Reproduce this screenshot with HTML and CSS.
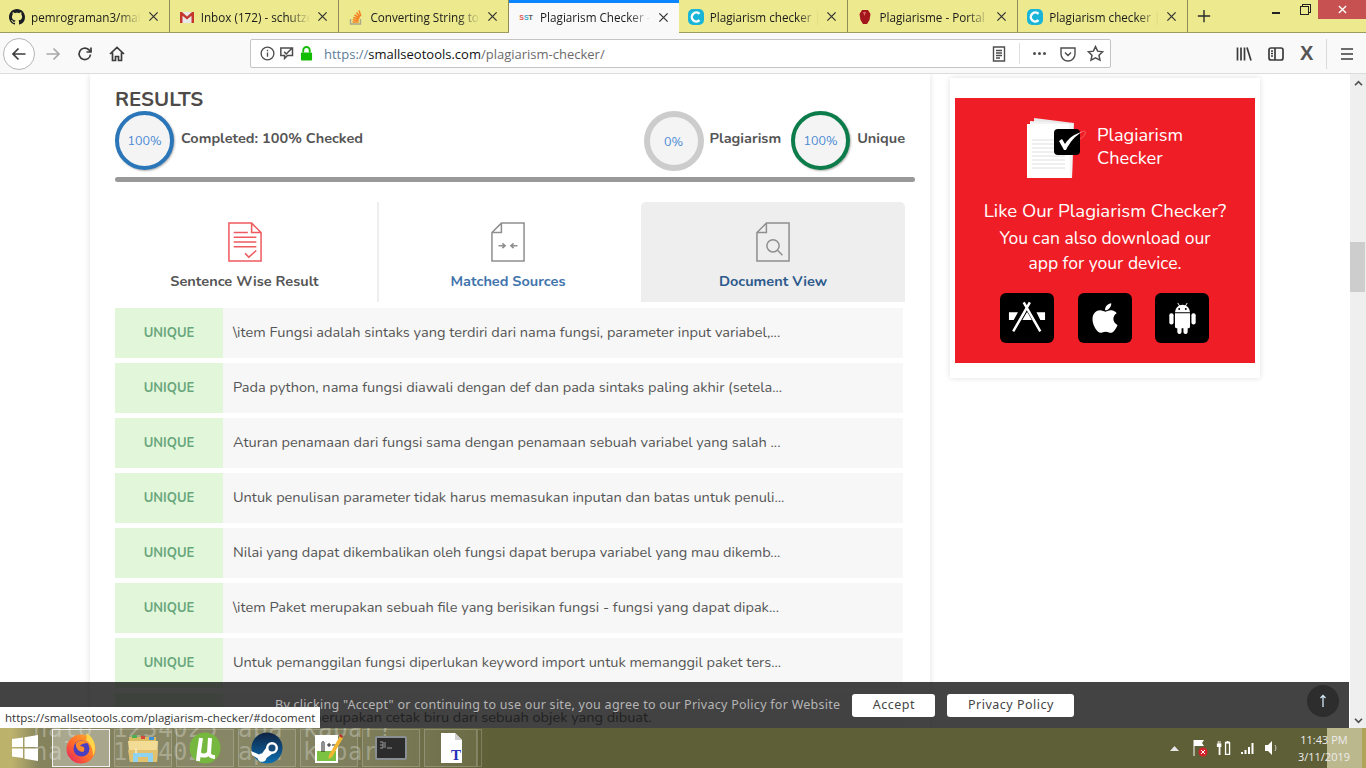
FILE: index.html
```html
<!DOCTYPE html>
<html>
<head>
  <meta charset="UTF-8">
  <title>Plagiarism Checker</title>
  <link rel="stylesheet" href="styles.css">
</head>
<body>
  <div id="browser">
    <!-- Tab strip -->
    <div class="tabbar">
      <div class="tab">
        <svg class="favicon" viewBox="0 0 16 16"><path fill="#1b1f23" d="M8 0C3.58 0 0 3.58 0 8c0 3.54 2.29 6.53 5.47 7.59.4.07.55-.17.55-.38 0-.19-.01-.82-.01-1.49-2.01.37-2.53-.49-2.69-.94-.09-.23-.48-.94-.82-1.13-.28-.15-.68-.52-.01-.53.63-.01 1.08.58 1.23.82.72 1.21 1.87.87 2.33.66.07-.52.28-.87.51-1.07-1.78-.2-3.64-.89-3.64-3.95 0-.87.31-1.59.82-2.15-.08-.2-.36-1.02.08-2.12 0 0 .67-.21 2.2.82.64-.18 1.32-.27 2-.27.68 0 1.36.09 2 .27 1.53-1.04 2.2-.82 2.2-.82.44 1.1.16 1.92.08 2.12.51.56.82 1.27.82 2.15 0 3.07-1.87 3.75-3.65 3.95.29.25.54.73.54 1.48 0 1.07-.01 1.93-.01 2.2 0 .21.15.46.55.38A8.013 8.013 0 0016 8c0-4.42-3.58-8-8-8z"/></svg>
        <span class="tab-title">pemrograman3/main.py</span>
        <svg class="tab-close" viewBox="0 0 12 12"><path d="M1.5 1.5l9 9M10.5 1.5l-9 9"/></svg>
      </div>
      <div class="tab">
        <svg class="favicon" viewBox="0 0 16 16"><path fill="#e8e8e8" d="M1 3h14v11H1z"/><path fill="#c5372c" d="M1 3h2l5 4.5L13 3h2v11h-2.5V6.8L8 10.5 3.5 6.8V14H1z"/></svg>
        <span class="tab-title">Inbox (172) - schutzen</span>
        <svg class="tab-close" viewBox="0 0 12 12"><path d="M1.5 1.5l9 9M10.5 1.5l-9 9"/></svg>
      </div>
      <div class="tab">
        <svg class="favicon" viewBox="0 0 16 16"><path fill="none" stroke="#a9a88a" stroke-width="1.4" d="M2.5 10v5h10v-5"/><path fill="none" stroke="#f48024" stroke-width="1.5" d="M4.5 13h6M4.7 10.8l5.9.6M5.2 8.5l5.7 1.5M6.5 6l5 3M8.5 3.5l3.5 4.5M11 1.5l1.8 5.500"/></svg>
        <span class="tab-title">Converting String to int</span>
        <svg class="tab-close" viewBox="0 0 12 12"><path d="M1.5 1.5l9 9M10.5 1.5l-9 9"/></svg>
      </div>
      <div class="tab tab-active">
        <span class="favicon sst-icon"><i>S</i><i>S</i><i>T</i></span>
        <span class="tab-title">Plagiarism Checker - 100%</span>
        <svg class="tab-close" viewBox="0 0 12 12"><path d="M1.5 1.5l9 9M10.5 1.5l-9 9"/></svg>
      </div>
      <div class="tab">
        <svg class="favicon" viewBox="0 0 16 16"><rect width="16" height="16" rx="5" fill="#19b5d8"/><path fill="none" stroke="#fff" stroke-width="2.4" d="M11.5 4.8a4.5 4.5 0 1 0 0 6.4"/></svg>
        <span class="tab-title">Plagiarism checker | Tool</span>
        <svg class="tab-close" viewBox="0 0 12 12"><path d="M1.5 1.5l9 9M10.5 1.5l-9 9"/></svg>
      </div>
      <div class="tab">
        <svg class="favicon" viewBox="0 0 16 16"><path fill="#a3161c" d="M5 1h6l2.5 4-1 6L10 15H6l-2.5-4-1-6z"/><path fill="#e0666a" d="M6 3h3L7.5 7z"/></svg>
        <span class="tab-title">Plagiarisme - Portal UM</span>
        <svg class="tab-close" viewBox="0 0 12 12"><path d="M1.5 1.5l9 9M10.5 1.5l-9 9"/></svg>
      </div>
      <div class="tab">
        <svg class="favicon" viewBox="0 0 16 16"><rect width="16" height="16" rx="5" fill="#19b5d8"/><path fill="none" stroke="#fff" stroke-width="2.4" d="M11.5 4.8a4.5 4.5 0 1 0 0 6.4"/></svg>
        <span class="tab-title">Plagiarism checker | Tool</span>
        <svg class="tab-close" viewBox="0 0 12 12"><path d="M1.5 1.5l9 9M10.5 1.5l-9 9"/></svg>
      </div>
      <svg class="new-tab" viewBox="0 0 16 16"><path d="M8 1v14M1 8h14"/></svg>
      <div class="window-buttons">
        <span class="win-btn"><i class="win-min"></i></span>
        <span class="win-btn"><i class="win-restore"></i></span>
        <span class="win-btn win-close">
          <svg viewBox="0 0 10 10"><path d="M1 1l8 8M9 1l-8 8"/></svg>
        </span>
      </div>
    </div>

    <!-- Navigation toolbar -->
    <div class="toolbar">
      <span class="back-circle">
        <svg class="tool-icon" viewBox="0 0 16 16"><path d="M14.5 8H2M7.5 2.5L2 8l5.5 5.5"/></svg>
      </span>
      <svg class="tool-icon forward" viewBox="0 0 16 16"><path d="M1.5 8H14M8.5 2.5L14 8l-5.5 5.5"/></svg>
      <svg class="tool-icon reload" viewBox="0 0 16 16"><path d="M13.5 8.5A5.7 5.7 0 1 1 11.5 3.5L14 6M14 1.5V6H9.5"/></svg>
      <svg class="tool-icon home" viewBox="0 0 16 16"><path d="M1 8l7-6.5L15 8M3.5 6.5V14.5h3v-4h3v4h3V6.5"/></svg>
      <div class="urlbar">
        <svg class="url-icon" viewBox="0 0 16 16"><circle cx="8" cy="8" r="6.8"/><path d="M8 7v4.5M8 4v1.600"/></svg>
        <svg class="url-icon url-chat" viewBox="0 0 18 16"><path d="M1 1.500h14v9H9l-3.500 3.500V10.500H1zM5 6l2.500 2.500L14 2"/></svg>
        <svg class="url-lock" viewBox="0 0 14 16"><path fill="none" stroke="#12bc00" stroke-width="2" d="M3.5 7V4.5a3.5 3.5 0 0 1 7 0V7"/><rect x="1" y="7" width="12" height="8.5" rx="1" fill="#12bc00"/></svg>
        <span class="url-text"><span class="url-scheme">https://</span><span class="url-domain">smallseotools.com</span>/plagiarism-checker/</span>
        <svg class="url-icon url-reader" viewBox="0 0 14 16"><path d="M1.5 1h11v14h-11zM4 4.500h6M4 7h6M4 9.500h6M4 12h4"/></svg>
        <span class="url-sep"></span>
        <span class="url-dots"><i></i><i></i><i></i></span>
        <svg class="url-icon url-pocket" viewBox="0 0 16 16"><path d="M1 2h14v6a7 7 0 0 1-14 0zM5 6.500l3 3 3-3"/></svg>
        <svg class="url-icon url-star" viewBox="0 0 16 16"><path d="M8 1.500l2 4.300 4.700.6-3.400 3.200.9 4.700L8 12l-4.200 2.300.9-4.700L1.300 6.400 6 5.800z"/></svg>
      </div>
      <svg class="tool-icon library" viewBox="0 0 16 16"><path d="M1.500 1.500v13M5 1.500v13M8.500 1.500v13M11 1.500l4 13"/></svg>
      <svg class="tool-icon sidebar" viewBox="0 0 16 16"><rect x="1" y="2" width="14" height="12" rx="2"/><path d="M7 2v12M3 5h2M3 7.500h2M3 10h2"/></svg>
      <span class="xmark">X</span>
      <span class="tool-sep"></span>
      <svg class="tool-icon burger" viewBox="0 0 16 16"><path d="M2 3h12M2 8h12M2 13h12"/></svg>
    </div>

    <!-- Web page area -->
    <div class="viewport">
      <div class="page">
        <div class="main-card">
          <h2 class="results-title">RESULTS</h2>
          <div class="stats">
            <div class="stat">
              <span class="ring ring-blue">100%</span>
              <span class="stat-label">Completed: 100% Checked</span>
            </div>
            <div class="stat stat-push">
              <span class="ring ring-gray">0%</span>
              <span class="stat-label stat-label-tight">Plagiarism</span>
            </div>
            <div class="stat">
              <span class="ring ring-green">100%</span>
              <span class="stat-label">Unique</span>
            </div>
          </div>
          <div class="progress-line"></div>

          <div class="view-tabs">
            <div class="view-tab view-tab-first">
              <svg class="doc-icon" viewBox="0 0 36 42" stroke="#ef5a5f"><path d="M1 1h24l10 10v30H1zM25 1v10h10M6 11h15M6 16h24M6 21h24M6 26h24M18 33l4 4 8-7"/></svg>
              <span class="view-label">Sentence Wise Result</span>
            </div>
            <div class="view-tab view-tab-second">
              <svg class="doc-icon" viewBox="0 0 36 42" stroke="#8f8f8f"><path d="M11 1h24v40H1V11zM11 1v10H1M8 25h7M12 22.500l3 2.500-3 2.500M28 25h-7M24 22.500L21 25l3 2.500"/></svg>
              <span class="view-label label-blue">Matched Sources</span>
            </div>
            <div class="view-tab view-tab-active">
              <svg class="doc-icon" viewBox="0 0 36 42" stroke="#8f8f8f"><path d="M11 1h24v40H1V11zM11 1v10H1"/><circle cx="18" cy="25" r="6.500"/><path d="M23 30l5 5"/></svg>
              <span class="view-label label-navy">Document View</span>
            </div>
          </div>

          <div class="result-list">
            <div class="result-row"><span class="result-tag">UNIQUE</span><span class="result-text">\item Fungsi adalah sintaks yang terdiri dari nama fungsi, parameter input variabel,...</span></div>
            <div class="result-row"><span class="result-tag">UNIQUE</span><span class="result-text">Pada python, nama fungsi diawali dengan def dan pada sintaks paling akhir (setela...</span></div>
            <div class="result-row"><span class="result-tag">UNIQUE</span><span class="result-text">Aturan penamaan dari fungsi sama dengan penamaan sebuah variabel yang salah ...</span></div>
            <div class="result-row"><span class="result-tag">UNIQUE</span><span class="result-text">Untuk penulisan parameter tidak harus memasukan inputan dan batas untuk penuli...</span></div>
            <div class="result-row"><span class="result-tag">UNIQUE</span><span class="result-text">Nilai yang dapat dikembalikan oleh fungsi dapat berupa variabel yang mau dikemb...</span></div>
            <div class="result-row"><span class="result-tag">UNIQUE</span><span class="result-text">\item Paket merupakan sebuah file yang berisikan fungsi - fungsi yang dapat dipak...</span></div>
            <div class="result-row"><span class="result-tag">UNIQUE</span><span class="result-text">Untuk pemanggilan fungsi diperlukan keyword import untuk memanggil paket ters...</span></div>
            <div class="result-row"><span class="result-tag">UNIQUE</span><span class="result-text">\item Class merupakan cetak biru dari sebuah objek yang dibuat.</span></div>
          </div>
        </div>

        <div class="side-card">
          <div class="promo">
            <div class="promo-head">
              <svg class="promo-logo" viewBox="0 0 60 60">
                <path fill="#e9e9e9" d="M7 0l40 5-2 55H8z"/>
                <path fill="#f4f4f4" d="M3 3l43 3-1 54H3z"/>
                <path fill="#fff" d="M0 6h42l1 54H0z"/>
                <path fill="none" stroke="#dedede" d="M5 22h33M5 26h33M5 30h33M5 34h33M5 38h33M5 42h33M5 46h33M5 50h33"/>
                <rect x="27" y="11" width="26" height="26" rx="4" fill="#000"/>
                <path fill="#fff" d="M32 23l3-2 3 5c4-6 9-10 17-12-7 4-12 10-16 18h-2z"/>
                <path fill="none" stroke="#f58b8f" stroke-width=".6" d="M54 14c4-2 5 0 4 2s-3 4-5 5"/>
              </svg>
              <div class="promo-name">Plagiarism<br>Checker</div>
            </div>
            <p class="promo-line promo-question">Like Our Plagiarism Checker?</p>
            <p class="promo-line">You can also download our</p>
            <p class="promo-line promo-last">app for your device.</p>
            <div class="store-icons">
              <span class="store-icon">
                <svg viewBox="0 0 40 36" width="38" height="36"><path fill="#fff" d="M1 12h9.500l-4.500 8H1zM39 12h-9l4 8h5zM17 12h6l4.500 8h-14z"/><path fill="none" stroke="#000" stroke-width="1.2" d="M25.500 1L7 33M15 1l18 32"/><path fill="none" stroke="#fff" stroke-width="2.600" d="M23 1.500L5.500 32M16.500 1.500L34 32"/></svg>
              </span>
              <span class="store-icon">
                <svg viewBox="0 0 384 512" width="28" height="34"><path fill="#fff" d="M318.7 268.7c-.2-36.7 16.4-64.4 50-84.8-18.8-26.9-47.2-41.7-84.7-44.6-35.5-2.8-74.3 20.7-88.5 20.7-15 0-49.4-19.7-76.4-19.7C63.3 141.2 4 184.8 4 273.5q0 39.3 14.4 81.2c12.8 36.7 59 126.7 107.2 125.2 25.2-.6 43-17.9 75.8-17.9 31.8 0 48.3 17.9 76.4 17.9 48.6-.7 90.4-82.5 102.6-119.3-65.2-30.7-61.7-90-61.7-91.9zm-56.6-164.2c27.3-32.4 24.8-61.9 24-72.5-24.1 1.4-52 16.4-67.9 34.9-17.5 19.8-27.8 44.3-25.6 71.9 26.1 2 49.9-11.4 69.5-34.3z"/></svg>
              </span>
              <span class="store-icon">
                <svg viewBox="0 0 30 34" width="29" height="32"><path fill="#fff" d="M7 11a8 8 0 0 1 16 0zM7 12h16v14a2 2 0 0 1-2 2H9a2 2 0 0 1-2-2z"/><rect x="1" y="12" width="4.500" height="12" rx="2.200" fill="#fff"/><rect x="24.500" y="12" width="4.500" height="12" rx="2.200" fill="#fff"/><rect x="9.500" y="26" width="4.500" height="8" rx="2.200" fill="#fff"/><rect x="16" y="26" width="4.500" height="8" rx="2.200" fill="#fff"/><path stroke="#fff" d="M10 1l2 3.500M20 1l-2 3.500"/><circle cx="11.500" cy="7.500" r="1" fill="#000"/><circle cx="18.500" cy="7.500" r="1" fill="#000"/></svg>
              </span>
            </div>
          </div>
        </div>
      </div>

      <div class="scrollbar">
        <svg class="scroll-arrow" viewBox="0 0 10 8"><path d="M1 6l4-4 4 4"/></svg>
        <div class="scroll-thumb"></div>
        <svg class="scroll-arrow scroll-arrow-down" viewBox="0 0 10 8"><path d="M1 2l4 4 4-4"/></svg>
      </div>

      <!-- Cookie notice lies over the page -->
      <div class="cookie-bar">
        <span class="cookie-text">By clicking "Accept" or continuing to use our site, you agree to our Privacy Policy for Website</span>
        <span class="cookie-btn cookie-accept">Accept</span>
        <span class="cookie-btn cookie-policy">Privacy Policy</span>
        <span class="to-top">
          <svg viewBox="0 0 8 14" width="8" height="14"><path fill="none" stroke="#cfe6f5" stroke-width="1.3" d="M4 13V1.500M1.500 4L4 1.500 6.500 4"/></svg>
        </span>
      </div>
      <div class="status-tip">https://smallseotools.com/plagiarism-checker/#docoment</div>
    </div>

    <!-- Windows taskbar -->
    <div class="taskbar">
      <div class="wallpaper">halo 1234025 apa kabar?<br>halo 1234025 apa kabar?</div>
      <svg class="start" viewBox="0 0 26 26"><path fill="#fff" d="M0 4l11-1.500V12H0zM12.500 2.300L26 0v12H12.500zM0 13.500h11V23L0 21.500zM12.500 13.500H26V26l-13.500-2.300z"/></svg>
      <div class="task-btn task-active">
        <svg class="task-icon" viewBox="0 0 32 32">
          <defs><linearGradient id="fox" x1="1" y1="0" x2="0" y2="1"><stop offset="0" stop-color="#ffb52e"/><stop offset=".55" stop-color="#ff6a2b"/><stop offset="1" stop-color="#e3196b"/></linearGradient></defs>
          <circle cx="16" cy="17" r="14.500" fill="url(#fox)"/>
          <path fill="#ffd54a" d="M21 1c4 2 9 7 9 15 0 3-1 6-2 8 0-9-3-13-7-16 1-2 1-5 0-7z"/>
          <circle cx="16.500" cy="16.500" r="8" fill="#4a3fc0"/>
          <path fill="#ff8a2b" d="M11 11c3-3 8-3 12 0-3 0-7 1-8 3 4 0 6 3 3 6-4 0-8-4-7-9z"/>
        </svg>
      </div>
      <div class="task-btn">
        <svg class="task-icon" viewBox="0 0 32 32">
          <path fill="#d9bb62" d="M2 5h27v5H2z"/>
          <path fill="#4caf50" d="M5 3h5v3H5z"/><path fill="#d9483b" d="M14 4h4v3h-4z"/><path fill="#3a8fd8" d="M22 5h5v3h-5z"/>
          <path fill="#f3dc95" d="M1 9h30l-1 21H3z"/>
          <path fill="#e2c26e" d="M1 18h30l-1 12H3z"/>
          <path fill="#8fd3f0" d="M6 21h20v9h-5v-5H11v5H6z"/>
          <path fill="#fff" opacity=".7" d="M8 21l1-6 1 6z"/>
        </svg>
      </div>
      <div class="task-btn">
        <svg class="task-icon" viewBox="0 0 32 32">
          <circle cx="16" cy="16" r="15.500" fill="#76b83f"/>
          <path fill="none" stroke="#fff" stroke-width="4" d="M12 6l-2 14c0 4 7 5 10 1M21 6l-1 15c0 2 2 4 6 4M10 20l-1 9"/>
        </svg>
      </div>
      <div class="task-btn">
        <svg class="task-icon" viewBox="0 0 32 32">
          <defs><linearGradient id="steam" x1="0" y1="0" x2="0" y2="1"><stop offset="0" stop-color="#0f2343"/><stop offset="1" stop-color="#0d6fb0"/></linearGradient></defs>
          <circle cx="16" cy="16" r="15.500" fill="url(#steam)"/>
          <path fill="#fff" d="M0 19l8 3.500a4.500 4.500 0 0 1 3-1l4-5.500a6 6 0 1 1 6 6l-5.500 4a4.500 4.500 0 0 1-8.800.5L1 23z"/>
          <circle cx="21" cy="16" r="3.500" fill="#174b7a"/>
        </svg>
      </div>
      <div class="task-btn">
        <svg class="task-icon" viewBox="0 0 32 32">
          <path fill="#fff" d="M2 3h23v28H2z"/>
          <path fill="#7cc242" d="M4 19h19v10H4z"/>
          <path fill="none" stroke="#222" d="M9 20V11c0-2 2-2 2 0v9M14 13h4M16 11v4M19 13h4"/>
          <path fill="#f2b632" d="M27 4l3 2-11 19-3.500 2 .5-4z"/>
          <path fill="#b5332b" d="M27 2l3 2-1 2-3-2z"/>
        </svg>
      </div>
      <div class="task-btn">
        <svg class="task-icon" viewBox="0 0 32 32">
          <rect x="0" y="4" width="32" height="24" rx="2" fill="#8a8f94"/>
          <rect x="2" y="6" width="28" height="20" fill="#2c2c2c"/>
          <path fill="none" stroke="#9a9a9a" d="M5 13h3M5 10h3v6H5M10 10v6M12 16h5"/>
        </svg>
      </div>
      <div class="task-btn task-btn-narrow">
        <svg class="task-icon" viewBox="0 0 32 32">
          <path fill="#fff" d="M6 1h14l7 7v23H6z"/>
          <path fill="#cfcfcf" d="M20 1l7 7h-7z"/>
          <text x="16" y="28" class="tex-t">T</text>
        </svg>
      </div>
      <div class="task-btn-edge"></div>

      <div class="tray">
        <svg class="tray-arrow" viewBox="0 0 9 5"><path fill="#e6e6e6" d="M4.500 0L9 5H0z"/></svg>
        <svg class="tray-icon" viewBox="0 0 16 18"><path fill="none" stroke="#fff" d="M2 1v16"/><path fill="#fff" d="M2 1h10l-2 3 2 3H2z"/><circle cx="11" cy="13" r="4.500" fill="#d4222a"/><path stroke="#fff" d="M9 11l4 4M13 11l-4 4"/></svg>
        <svg class="tray-icon" viewBox="0 0 18 18"><path fill="#fff" d="M2 1h1v3h1V1h1v3h1v4H5v9H3V8H1V4h1zM10 2h2V1h2v1h2v15h-6z"/><path fill="#5f5f37" d="M11.500 4h3v11.500h-3z"/></svg>
        <svg class="tray-icon" viewBox="0 0 16 14"><path fill="#fff" d="M1 11h2v2H1zM4.500 9h2v4h-2zM8 6h2v7H8zM11.500 2h2v11h-2z"/></svg>
        <svg class="tray-icon" viewBox="0 0 16 16"><path fill="#fff" d="M1 5h3l4-4v14l-4-4H1z"/><path fill="none" stroke="#ccc" d="M11 5c1.200 1.800 1.200 4.200 0 6"/></svg>
        <div class="clock"><span>11:43 PM</span><span>3/11/2019</span></div>
      </div>
      <div class="show-desktop"></div>
    </div>
  </div>
</body>
</html>
```
FILE: styles.css
```css
/* Reset and window frame */
body {
  margin: 0;
  overflow: hidden;
  font-family: "Nunito", "Lato", "Liberation Sans", sans-serif;
}
#browser {
  width: 1366px;
  height: 768px;
  display: flex;
  flex-direction: column;
  background: white;
}

/* Tab strip */
.tabbar {
  height: 33px;
  flex: none;
  display: flex;
  box-sizing: border-box;
  background: #ece98e;
  border-bottom: 1px solid #9d9b5e;
  font-family: "Open Sans", "Liberation Sans", sans-serif;
  font-size: 11.7px;
  color: #1a1a1a;
}
.tab {
  width: 169.7px;
  flex: none;
  box-sizing: border-box;
  display: flex;
  align-items: center;
  padding: 1px 10px 0 9px;
  border-right: 1px solid #8f8d55;
}
.tab-active {
  background: #f9f9fa;
  border-top: 3px solid #0a84ff;
  border-right: none;
  padding: 0 10px 2px 9px;
  height: 33px;
}
.favicon {
  width: 16px;
  height: 16px;
  flex: none;
  margin-right: 6px;
}
.sst-icon {
  display: flex;
  align-items: center;
  justify-content: center;
  font-family: "Liberation Sans", sans-serif;
  font-size: 7px;
  font-weight: bold;
}
.sst-icon i { font-style: normal; color: #e2574c; }
.sst-icon i + i { color: #3fa9c9; }
.sst-icon i + i + i { color: #555; }
.tab-title {
  flex: 1;
  min-width: 0;
  white-space: nowrap;
  overflow: hidden;
  -webkit-mask-image: linear-gradient(to right, black 80%, transparent 100%);
  mask-image: linear-gradient(to right, black 80%, transparent 100%);
}
.tab-close {
  width: 11px;
  height: 11px;
  flex: none;
  margin-left: 7px;
  fill: none;
  stroke: #333;
  stroke-width: 1.4;
}
.new-tab {
  width: 14px;
  height: 14px;
  margin: 9px 0 0 9px;
  fill: none;
  stroke: #2a2a2a;
  stroke-width: 1.6;
}
.window-buttons {
  margin-left: auto;
  display: flex;
  align-items: flex-start;
  height: 20px;
}
.win-btn {
  width: 28px;
  height: 19px;
  display: flex;
  align-items: center;
  justify-content: center;
}
.win-close {
  width: 48px;
  background: #c75050;
}
.win-close svg {
  width: 9px;
  height: 9px;
  fill: none;
  stroke: white;
  stroke-width: 1.5;
}
.win-min {
  width: 8px;
  height: 2px;
  margin-top: 6px;
  background: #222;
}
.win-restore {
  width: 7px;
  height: 7px;
  margin-top: 2px;
  border: 1px solid #222;
  box-shadow: 2px -2px 0 -1px #ece98e, 2px -2px 0 0 #222;
}

/* Navigation toolbar */
.toolbar {
  height: 41px;
  flex: none;
  box-sizing: border-box;
  display: flex;
  align-items: center;
  background: #f9f9fa;
  border-bottom: 1px solid #dcdcdc;
  padding: 1px 0 0 3px;
}
.tool-icon {
  width: 16px;
  height: 16px;
  flex: none;
  fill: none;
  stroke: #3c3c3c;
  stroke-width: 1.7;
}
.back-circle {
  width: 32px;
  height: 32px;
  box-sizing: border-box;
  border: 1px solid #b5b5b5;
  border-radius: 50%;
  background: white;
  display: flex;
  align-items: center;
  justify-content: center;
  flex: none;
}
.forward { margin-left: 10px; stroke: #a8a8a8; }
.reload { margin-left: 16px; }
.home { margin-left: 16px; }
.urlbar {
  width: 861px;
  height: 29px;
  margin-left: 125px;
  box-sizing: border-box;
  background: white;
  border: 1px solid #c4c4c4;
  border-radius: 2px;
  display: flex;
  align-items: center;
  padding-left: 9px;
  font-family: "Open Sans", "Liberation Sans", sans-serif;
  font-size: 13px;
  color: #6b6b6b;
  flex: none;
}
.url-icon {
  width: 15px;
  height: 15px;
  flex: none;
  fill: none;
  stroke: #4d4d4d;
  stroke-width: 1.4;
  margin-right: 5px;
}
.url-chat { stroke-width: 1.8; }
.url-lock {
  width: 13px;
  height: 15px;
  flex: none;
  margin-right: 11px;
}
.url-text { white-space: nowrap; width: 667px; flex: none; }
.url-scheme { color: #5e7d99; }
.url-domain { color: #111; }
.url-reader { margin-right: 0; width: 16px; height: 16px; }
.url-sep {
  width: 1px;
  height: 21px;
  background: #dedede;
  margin: 0 13px 0 12px;
}
.url-dots { display: flex; gap: 2px; margin-right: 14px; }
.url-dots i {
  width: 3px;
  height: 3px;
  border-radius: 50%;
  background: #4d4d4d;
}
.url-pocket { margin-right: 11px; width: 16px; height: 16px; }
.url-star { margin-right: 0; width: 17px; height: 17px; }
.library { margin-left: 125px; }
.sidebar { margin-left: 16px; }
.xmark {
  font-family: "Liberation Sans", sans-serif;
  font-size: 20px;
  font-weight: bold;
  color: #555;
  margin-left: 16px;
  flex: none;
}
.tool-sep {
  width: 1px;
  height: 30px;
  background: #dadada;
  margin-left: 13px;
  flex: none;
}
.burger { margin-left: 12px; }

/* Page area */
.viewport {
  flex: 1;
  min-height: 0;
  display: flex;
  position: relative;
  overflow: hidden;
}
.page {
  flex: 1;
  display: flex;
  align-items: flex-start;
  gap: 20px;
  padding-left: 90px;
  color: #555;
}
.main-card {
  width: 840px;
  height: 700px;
  flex: none;
  box-sizing: border-box;
  padding: 14px 15px 0 25px;
  background: white;
  box-shadow: 0 0 6px rgba(0, 0, 0, 0.13);
}
.results-title {
  margin: 0;
  font-size: 20.5px;
  line-height: 23px;
  font-weight: bold;
  color: #4e4a48;
}
.stats {
  display: flex;
  align-items: flex-start;
  margin: 0 10px 0 0;
}
.stat {
  display: flex;
  align-items: flex-start;
}
.stat-push { margin-left: auto; margin-right: 10px; }
.stat-label {
  font-size: 14.5px;
  line-height: 20px;
  font-weight: bold;
  margin: 17px 0 0 7px;
  color: #555;
  white-space: nowrap;
}
.stat-label-tight { margin-left: 6px; }
.ring {
  width: 59px;
  height: 59px;
  box-sizing: border-box;
  border-radius: 50%;
  background: #f4f4f4;
  border: 4px solid #2a76b8;
  box-shadow: 1px 1px 2px rgba(0, 0, 0, 0.3);
  display: flex;
  align-items: center;
  justify-content: center;
  font-size: 12.5px;
  color: #4a8ad4;
  flex: none;
}
.ring-gray { width: 60px; height: 60px; border: 6px solid #cccccc; box-shadow: none; }
.ring-green { border-color: #0c7c4a; }
.progress-line {
  height: 5px;
  margin-top: 6px;
  background: #999;
  border-radius: 3px;
}

/* View tabs */
.view-tabs {
  display: flex;
  height: 100px;
  margin: 20px 10px 0 0;
}
.view-tab {
  display: flex;
  flex-direction: column;
  align-items: center;
  box-sizing: border-box;
  padding-top: 20px;
}
.view-tab-first { width: 264px; border-right: 2px solid #eee; padding-right: 3px; }
.view-tab-second { width: 262px; padding-right: 4px; }
.view-tab-active { flex: 1; background: #eee; border-radius: 5px 5px 0 0; }
.doc-icon {
  width: 34px;
  height: 40px;
  fill: none;
  stroke-width: 1.6;
}
.view-label {
  font-size: 14.5px;
  font-weight: bold;
  line-height: 20px;
  margin-top: 9px;
  color: #555;
}
.label-blue { color: #3f74ad; }
.label-navy { color: #2d5a8c; }

/* Result rows */
.result-list {
  display: flex;
  flex-direction: column;
  gap: 5px;
  margin: 6px 12px 0 0;
}
.result-row {
  height: 50px;
  flex: none;
  display: flex;
  align-items: center;
  background: #f7f7f7;
}
.result-tag {
  width: 108px;
  height: 100%;
  background: #e2f7da;
  color: #68a67c;
  font-size: 13px;
  font-weight: bold;
  display: flex;
  align-items: center;
  justify-content: center;
  flex: none;
}
.result-text {
  font-size: 14.55px;
  padding: 0 0 2px 10px;
  white-space: nowrap;
  color: #555;
}

/* Sidebar promo */
.side-card {
  width: 310px;
  height: 300px;
  flex: none;
  box-sizing: border-box;
  margin-top: 4px;
  padding: 20px 5px 15px;
  background: white;
  box-shadow: 0 0 6px rgba(0, 0, 0, 0.13);
}
.promo {
  height: 265px;
  background: #ef1e26;
  color: white;
  text-align: center;
  box-sizing: border-box;
  padding-top: 20px;
}
.promo-head {
  display: flex;
  gap: 10px;
  height: 60px;
  padding-left: 72px;
}
.promo-logo { width: 60px; height: 60px; flex: none; }
.promo-name {
  font-size: 18.2px;
  line-height: 22.5px;
  text-align: left;
  padding-top: 6px;
  width: 100px;
}
.promo-line {
  margin: 0;
  font-size: 17.5px;
  line-height: 25px;
}
.promo-question { font-size: 18.6px; margin-top: 21px; line-height: 24px; margin-bottom: 3px; }
.store-icons {
  display: flex;
  justify-content: center;
  gap: 23.5px;
  margin-top: 17px;
  padding-right: 1px;
}
.store-icon {
  width: 54px;
  height: 50px;
  background: black;
  border-radius: 6px;
  display: flex;
  align-items: center;
  justify-content: center;
}

/* Scrollbar */
.scrollbar {
  width: 16px;
  flex: none;
  background: #efefef;
  display: flex;
  flex-direction: column;
  align-items: center;
  padding-top: 6px;
  box-sizing: border-box;
}
.scroll-arrow {
  width: 9px;
  height: 7px;
  fill: none;
  stroke: #505050;
  stroke-width: 2;
}
.scroll-thumb {
  width: 15px;
  height: 50px;
  margin: 155px 1px 0 0;
  background: #cdcdcd;
  flex: none;
}
.scroll-arrow-down { margin-top: auto; margin-bottom: 4px; }

/* Overlays */
.cookie-bar {
  position: absolute;
  left: 0;
  right: 17px;
  bottom: 0;
  height: 46px;
  display: flex;
  align-items: center;
  padding-left: 275px;
  box-sizing: border-box;
  background: rgba(20, 20, 20, 0.8);
  font-family: "Noto Sans", "Open Sans", sans-serif;
  font-size: 12.5px;
  letter-spacing: 0.27px;
  color: #b5b5b5;
}
.cookie-text { white-space: nowrap; padding-bottom: 1px; }
.cookie-btn {
  height: 23px;
  box-sizing: border-box;
  padding-bottom: 2px;
  background: white;
  border-radius: 3px;
  display: flex;
  align-items: center;
  justify-content: center;
  letter-spacing: 0.5px;
  color: #444;
}
.cookie-accept { width: 83px; margin-left: 12px; }
.cookie-policy { width: 127px; margin-left: 12px; }
.to-top {
  position: absolute;
  left: 1307px;
  top: 3px;
  width: 32px;
  height: 32px;
  border-radius: 50%;
  background: #2d2d2d;
  display: flex;
  align-items: center;
  justify-content: center;
}
.status-tip {
  position: absolute;
  left: 0;
  bottom: 0;
  height: 21px;
  line-height: 21px;
  padding: 0 5px;
  background: white;
  font-family: "Open Sans", sans-serif;
  font-size: 11.5px;
  color: #333;
  white-space: nowrap;
}

/* Taskbar */
.taskbar {
  height: 40px;
  flex: none;
  display: flex;
  align-items: stretch;
  position: relative;
  overflow: hidden;
  background: linear-gradient(to right, #bdb26c 0, #bdb26c 12px, #85835e 40px, #7d7d5b 300px, #6e6e48 420px, #5f5f37 490px, #5f5f37 1362px, #b0a45a 1362px);
}
.wallpaper {
  position: absolute;
  left: 33px;
  top: -10px;
  font-family: "DejaVu Sans Mono", monospace;
  font-size: 24px;
  line-height: 23px;
  letter-spacing: 0.55px;
  word-spacing: 5px;
  white-space: nowrap;
  color: rgba(255, 255, 255, 0.28);
}
.start {
  width: 26px;
  height: 26px;
  margin: 7px 14px 0 12px;
  position: relative;
  flex: none;
}
.task-btn {
  width: 58px;
  height: 38px;
  margin: 1px 4px 0 0;
  box-sizing: border-box;
  border: 1px solid rgba(255, 255, 255, 0.2);
  background: rgba(255, 255, 255, 0.06);
  display: flex;
  align-items: center;
  justify-content: center;
  position: relative;
  flex: none;
}
.task-active {
  border: 1px solid #f2f2f2;
  background: rgba(255, 255, 255, 0.3);
}
.task-btn-narrow { width: 53px; margin-right: 0; }
.task-btn-edge {
  width: 5px;
  height: 38px;
  margin-top: 1px;
  box-sizing: border-box;
  border: 1px solid rgba(255, 255, 255, 0.2);
  flex: none;
}
.task-icon { width: 32px; height: 32px; }
.tex-t {
  font-family: "Liberation Serif", serif;
  font-size: 15px;
  font-weight: bold;
  fill: #2530b8;
}
.tray {
  position: absolute;
  left: 1170px;
  top: 0;
  height: 40px;
  display: flex;
  align-items: center;
  z-index: 1;
}
.tray-arrow { width: 9px; height: 5px; margin-right: 13px; }
.tray-icon { width: 16px; height: 18px; margin-right: 8px; flex: none; }
.clock {
  display: flex;
  flex-direction: column;
  align-items: center;
  width: 56px;
  margin-left: 8px;
  font-family: "Open Sans", sans-serif;
  font-size: 11px;
  line-height: 17px;
  color: #ececec;
  white-space: nowrap;
}
.show-desktop {
  position: absolute;
  right: 4px;
  top: 0;
  bottom: 0;
  width: 35px;
  background: #bcb88e;
}
```
